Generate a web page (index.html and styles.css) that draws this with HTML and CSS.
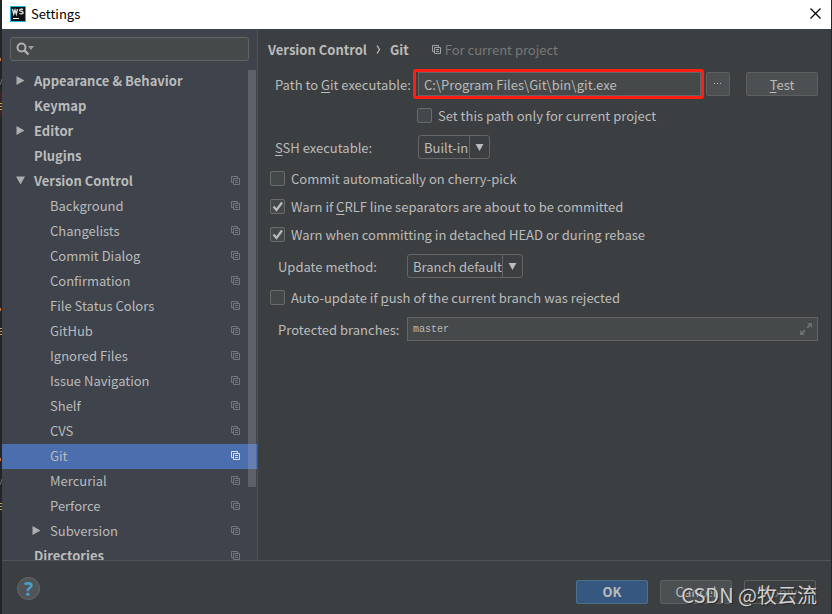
FILE: index.html
```
<!DOCTYPE html>
<html lang="en">
<head>
  <meta charset="UTF-8">
  <title>Settings</title>
  <meta name="viewport" content="width=device-width, initial-scale=1.0">
  <link rel="stylesheet" href="styles.css">
</head>
<body>
  <!-- shared icons -->
  <svg class="defs" width="0" height="0" aria-hidden="true">
    <symbol id="copy" viewBox="0 0 9 9">
      <path d="M2 6.5H.5V.5h6V2M2.500 2.500h6v6h-6zM4 4.500h3M4 6.500h3" fill="none" stroke="currentColor"/>
    </symbol>
    <symbol id="right" viewBox="0 0 8 9"><path d="M0 0l8 4.500L0 9z" fill="currentColor"/></symbol>
    <symbol id="down" viewBox="0 0 9 8"><path d="M0 0h9L4.500 8z" fill="currentColor"/></symbol>
  </svg>

  <!-- sliver of the editor behind the dialog -->
  <svg class="editor" width="2" height="614" viewBox="0 0 2 614" aria-hidden="true">
    <path d="M0 58h1v3H0zM0 308h1v3H0zM0 458h1v3H0z" fill="#cc7832"/>
    <path d="M0 91h2v26H0z" fill="#3a2323"/>
    <path d="M0 103h2v1H0zM0 106h2v1H0zM0 109h2v1H0zM0 328h2v1H0zM0 331h2v1H0zM0 334h2v1H0zM0 503h2v1H0zM0 506h2v1H0zM0 509h2v1H0z" fill="#c9a050"/>
    <path d="M0 85l2-6M0 485l2-6" stroke="#666"/>
  </svg>

  <div class="dialog">
    <header class="titlebar">
      <svg class="logo" width="16" height="16" viewBox="0 0 16 16">
        <rect width="16" height="16" fill="#1fb8e0"/>
        <rect x="1" y="1" width="14" height="14" fill="#111"/>
        <path d="M2.500 3l1.200 5L5 4l1.300 4 1.200-5M13 3.700c-1-1-3.500-.8-3.300.6.200 1.300 3.300.7 3.400 2.200.1 1.500-2.600 1.800-3.700.6" fill="none" stroke="#ddd" stroke-width="1.400"/>
        <path d="M3 12h6v1H3z" fill="#fff"/>
      </svg>
      <h1>Settings</h1>
      <button class="close" aria-label="Close">
        <svg width="11" height="11" viewBox="0 0 11 11"><path d="M.5.5l10 10M10.500.5l-10 10" stroke="#000" stroke-width="1.200"/></svg>
      </button>
    </header>

    <div class="body">
      <aside class="sidebar">
        <label class="search">
          <svg width="19" height="14" viewBox="0 0 19 14">
            <circle cx="5.500" cy="5.500" r="4" fill="none" stroke="#afb1b3" stroke-width="2"/>
            <path d="M8.500 8.500l4 4" stroke="#afb1b3" stroke-width="2.400"/>
            <path d="M12 4h6l-3 4z" fill="#9a9c9e"/>
          </svg>
          <input type="text" aria-label="Search settings">
        </label>
        <nav class="tree">
          <a class="item top" href="#"><svg class="arrow"><use href="#right"/></svg>Appearance &amp; Behavior</a>
          <a class="item top" href="#">Keymap</a>
          <a class="item top" href="#"><svg class="arrow"><use href="#right"/></svg>Editor</a>
          <a class="item top" href="#">Plugins</a>
          <a class="item top" href="#"><svg class="arrow"><use href="#down"/></svg>Version Control<svg class="copy"><use href="#copy"/></svg></a>
          <a class="item" href="#">Background<svg class="copy"><use href="#copy"/></svg></a>
          <a class="item" href="#">Changelists<svg class="copy"><use href="#copy"/></svg></a>
          <a class="item" href="#">Commit Dialog<svg class="copy"><use href="#copy"/></svg></a>
          <a class="item" href="#">Confirmation<svg class="copy"><use href="#copy"/></svg></a>
          <a class="item" href="#">File Status Colors<svg class="copy"><use href="#copy"/></svg></a>
          <a class="item" href="#">GitHub<svg class="copy"><use href="#copy"/></svg></a>
          <a class="item" href="#">Ignored Files<svg class="copy"><use href="#copy"/></svg></a>
          <a class="item" href="#">Issue Navigation<svg class="copy"><use href="#copy"/></svg></a>
          <a class="item" href="#">Shelf<svg class="copy"><use href="#copy"/></svg></a>
          <a class="item" href="#">CVS<svg class="copy"><use href="#copy"/></svg></a>
          <a class="item selected" href="#">Git<svg class="copy"><use href="#copy"/></svg></a>
          <a class="item" href="#">Mercurial<svg class="copy"><use href="#copy"/></svg></a>
          <a class="item" href="#">Perforce<svg class="copy"><use href="#copy"/></svg></a>
          <a class="item" href="#"><svg class="arrow"><use href="#right"/></svg>Subversion<svg class="copy"><use href="#copy"/></svg></a>
          <a class="item top" href="#">Directories<svg class="copy"><use href="#copy"/></svg></a>
          <span class="scrollbar"></span>
        </nav>
      </aside>

      <main class="content">
        <h2 class="crumbs">
          <span>Version Control</span>
          <svg width="5" height="9" viewBox="0 0 5 9"><path d="M1 .5l2.500 4L1 8.500" fill="none" stroke="currentColor" stroke-width="1.300"/></svg>
          <span>Git</span>
          <small><svg class="copy"><use href="#copy"/></svg>For current project</small>
        </h2>

        <form class="form">
          <div class="row">
            <label class="name" for="path">Path to <u>G</u>it executable:</label>
            <span class="marked"><input class="field" id="path" type="text" value="C:\Program Files\Git\bin\git.exe"></span>
            <button class="btn browse" type="button" aria-label="Browse">
              <svg width="8" height="2" viewBox="0 0 8 2"><path d="M0 0h1v1H0zM3 0h1v1H3zM6 0h1v1H6z" fill="currentColor"/></svg>
            </button>
            <button class="btn" type="button"><span><u>T</u>est</span></button>
          </div>
          <label class="check nested"><input type="checkbox">Set this path only for current project</label>
          <div class="row">
            <label class="name ssh" for="ssh"><u>S</u>SH executable:</label>
            <span class="combo">
              <select id="ssh"><option>Built-in</option><option>Native</option></select>
              <svg class="drop"><use href="#down"/></svg>
            </span>
          </div>
          <div class="checks">
            <label class="check"><input type="checkbox">Commit automatically on cherry-pick</label>
            <label class="check"><input type="checkbox" checked><span>Warn if <u>C</u>RLF line separators are about to be committed</span></label>
            <label class="check"><input type="checkbox" checked>Warn when committing in detached HEAD or during rebase</label>
          </div>
          <div class="row indent">
            <label class="name" for="update">Update method:</label>
            <span class="combo wide">
              <select id="update"><option>Branch default</option><option>Merge</option><option>Rebase</option></select>
              <svg class="drop"><use href="#down"/></svg>
            </span>
          </div>
          <label class="check"><input type="checkbox"><span>Auto-update if <u>p</u>ush of the current branch was rejected</span></label>
          <div class="row indent">
            <label class="name" for="branches">Protected branches:</label>
            <span class="branches">
              <input id="branches" type="text" value="master">
              <svg width="12" height="12" viewBox="0 0 12 12"><path d="M7 0h5v5l-1.700-1.700L8 5.500 6.500 4l2.200-2.300zM5 12H0V7l1.700 1.700L4 6.500 5.500 8l-2.200 2.300z" fill="#6b6e70"/></svg>
            </span>
          </div>
        </form>
      </main>
    </div>

    <footer class="footer">
      <button class="help" aria-label="Help">?</button>
      <button class="btn primary">OK</button>
      <button class="btn">Cancel</button>
      <button class="btn" disabled>Apply</button>
      <span class="watermark">CSDN @牧云流</span>
    </footer>
  </div>
</body>
</html>
```
FILE: styles.css
```
* {
  box-sizing: border-box;
}

body {
  margin: 0;
  background-color: #242526;
  color: #bbbbbb;
  font: 13px/19px "Noto Sans CJK SC", "Noto Sans", sans-serif;
}

input, select, button {
  margin: 0;
  font: inherit;
  color: inherit;
}

u {
  text-underline-offset: 2px;
}

.defs {
  position: absolute;
}

.editor {
  position: absolute;
  top: 0;
  left: 0;
}

.dialog {
  display: flex;
  flex-direction: column;
  height: 100vh;
  margin: 0 1px 0 2px;
  background-color: #3c3f41;
}

/* title bar */
.titlebar {
  display: flex;
  align-items: center;
  flex: none;
  height: 29px;
  padding: 0 10px 2px 8px;
  background-color: #ffffff;
  color: #000000;
}

.titlebar h1 {
  flex: 1;
  margin: 0 0 0 5px;
  font-size: 13px;
  font-weight: normal;
}

.close {
  display: flex;
  padding: 0;
  border: none;
  background: none;
}

.body {
  display: flex;
  flex: 1;
  min-height: 0;
}

/* settings tree */
.sidebar {
  display: flex;
  flex-direction: column;
  flex: none;
  width: 256px;
  padding-top: 8px;
  border-right: 1px solid #4f5254;
  background-color: #3e434c;
}

.search {
  display: flex;
  align-items: center;
  flex: none;
  height: 24px;
  margin: 0 8px;
  padding: 0 5px;
  border: 1px solid #646464;
  border-radius: 3px;
  background-color: #45494a;
}

.search input {
  flex: 1;
  min-width: 0;
  border: none;
  outline: none;
  background: none;
}

.tree {
  position: relative;
  flex: 1;
  min-height: 0;
  margin-top: 8px;
  overflow: hidden;
}

.item {
  display: flex;
  align-items: center;
  height: 25px;
  padding: 0 17px 2px 48px;
  color: inherit;
  text-decoration: none;
}

.item.top {
  padding-left: 32px;
  font-weight: bold;
}

.item.selected {
  background-color: #4b6eaf;
}

.arrow {
  width: 9px;
  height: 9px;
  margin-left: -18px;
  margin-right: 9px;
  color: #adadad;
}

.copy {
  width: 9px;
  height: 9px;
  color: #73777c;
}

.item .copy {
  margin-left: auto;
}

.selected .copy {
  color: #d5deee;
}

.scrollbar {
  position: absolute;
  top: 1px;
  right: 1px;
  width: 8px;
  height: 417px;
  background-color: rgba(166, 166, 180, 0.3);
}

/* git page */
.content {
  flex: 1;
  min-width: 0;
  padding: 11px 13px 0 10px;
}

.crumbs {
  display: flex;
  align-items: center;
  height: 19px;
  margin: 0 0 13px;
  gap: 9px;
  font-size: 13px;
}

.crumbs small {
  display: flex;
  align-items: center;
  gap: 4px;
  margin-left: 14px;
  color: #787878;
  font-size: 13px;
  font-weight: normal;
}

.crumbs .copy {
  color: #a0a2a4;
}

.form {
  display: flex;
  flex-direction: column;
  gap: 10px;
}

.row {
  display: flex;
  align-items: center;
  height: 24px;
  padding-left: 7px;
}

.name {
  flex: none;
  width: 138px;
  white-space: nowrap;
}

.name.ssh {
  width: 143px;
}

.indent {
  padding-left: 10px;
}

.indent .name {
  width: 129px;
}

.marked {
  display: flex;
  flex: 1;
  min-width: 0;
  margin: -3px 2px -3px 0;
  padding-left: 2px;
  border: 3px solid #ff1e12;
  border-radius: 3px;
}

.field {
  flex: 1;
  min-width: 0;
  height: 24px;
  padding: 0 5px;
  border: 1px solid #646464;
  background-color: #45494a;
}

.btn {
  display: flex;
  align-items: center;
  justify-content: center;
  width: 72px;
  height: 24px;
  padding: 0;
  border: 1px solid #5e6060;
  border-radius: 2px;
  background-color: #4c5052;
}

.browse {
  width: 24px;
  margin-right: 16px;
}

.check {
  display: flex;
  align-items: center;
  height: 19px;
}

.nested {
  margin-left: 147px;
}

.check input {
  width: 15px;
  height: 15px;
  margin-right: 6px;
  border: 1px solid #6b6b6b;
  border-radius: 2px;
  background-color: #43494a;
  appearance: none;
}

.content .check {
  padding-left: 2px;
}

.check input:checked {
  background-image: url("data:image/svg+xml,%3Csvg xmlns='http://www.w3.org/2000/svg' viewBox='0 0 13 13'%3E%3Cpath d='M2.500 6.500l3 3.500L11 2.500' fill='none' stroke='%23bbb' stroke-width='2.200'/%3E%3C/svg%3E");
}

.checks {
  display: flex;
  flex-direction: column;
  gap: 9px;
}

/* drop-downs */
.combo {
  position: relative;
  width: 72px;
}

.combo.wide {
  width: 116px;
}

.combo select {
  display: block;
  width: 100%;
  height: 24px;
  padding: 0 20px 0 5px;
  border: 1px solid #646464;
  border-radius: 3px;
  background: linear-gradient(#646464, #646464) right 19px top / 1px 100% no-repeat;
  appearance: none;
}

.drop {
  position: absolute;
  top: 9px;
  right: 6px;
  width: 9px;
  height: 7px;
  pointer-events: none;
}

.branches {
  display: flex;
  align-items: center;
  flex: 1;
  min-width: 0;
  height: 24px;
  padding: 0 5px;
  border: 1px solid #646464;
  background-color: #45494a;
}

.branches input {
  flex: 1;
  min-width: 0;
  padding: 0;
  border: none;
  outline: none;
  background: none;
  font: 10px "Liberation Mono", monospace;
}

/* bottom buttons */
.footer {
  position: relative;
  display: flex;
  align-items: center;
  flex: none;
  gap: 12px;
  height: 54px;
  padding: 8px 15px 0;
  border-top: 1px solid #515456;
}

.help {
  width: 23px;
  height: 23px;
  margin: -6px auto 0 0;
  padding: 0;
  border: 1px solid #666a6c;
  border-radius: 50%;
  background-color: #505456;
  color: #4a9fc8;
  font: bold 19px/20px "Noto Sans", sans-serif;
}

.primary {
  border-color: #4c708c;
  background-color: #365880;
  font-weight: bold;
}

.btn:disabled {
  background-color: #3c3f41;
  color: #777777;
}

.watermark {
  position: absolute;
  right: 14px;
  bottom: 5px;
  color: #d0d0d0;
  font: 20px/28px "Noto Sans CJK SC", sans-serif;
  text-shadow: 1px 1px 1px #222222;
}
```
